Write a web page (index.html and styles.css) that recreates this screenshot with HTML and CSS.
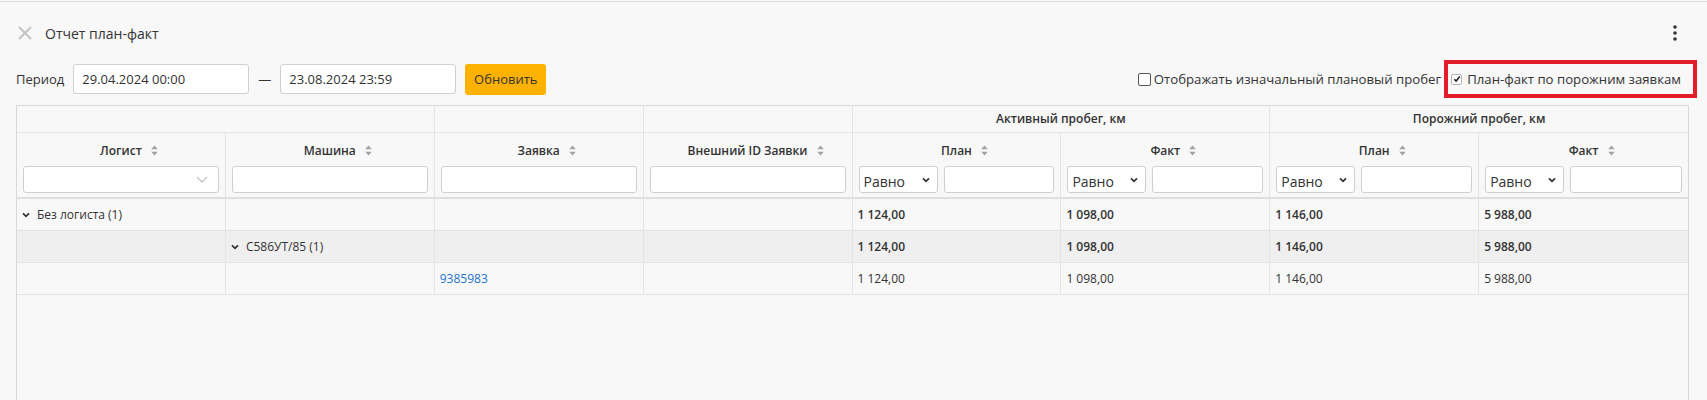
FILE: index.html
```html
<!DOCTYPE html>
<html lang="ru">
<head>
<meta charset="utf-8">
<title>Отчет план-факт</title>
<link rel="stylesheet" href="styles.css">
</head>
<body>
<div class="app">
  <div class="titlebar">
    <svg class="close-icon" width="14" height="14" viewBox="0 0 14 14"><path d="M1 1L13 13M13 1L1 13" stroke="#c4c4c4" stroke-width="2" fill="none"/></svg>
    <span class="title">Отчет план-факт</span>
    <span class="spacer"></span>
    <svg class="kebab" width="4" height="16" viewBox="0 0 4 16"><circle cx="2" cy="2" r="1.8" fill="#333"/><circle cx="2" cy="8" r="1.8" fill="#333"/><circle cx="2" cy="14" r="1.8" fill="#333"/></svg>
  </div>

  <div class="toolbar">
    <span class="label">Период</span>
    <div class="date-input">29.04.2024 00:00</div>
    <span class="dash">—</span>
    <div class="date-input">23.08.2024 23:59</div>
    <button class="btn-refresh">Обновить</button>
    <span class="spacer"></span>
    <label class="check">
      <span class="box"></span>
      <span>Отображать изначальный плановый пробег</span>
    </label>
    <label class="check highlight">
      <span class="box small"><svg width="8" height="8" viewBox="0 0 8 8"><path d="M1.3 4.2L3.1 6L6.8 1.6" stroke="#222" stroke-width="1.6" fill="none"/></svg></span>
      <span>План-факт по порожним заявкам</span>
    </label>
  </div>

  <div class="grid-wrap">
    <table class="grid">
      <colgroup>
        <col><col><col><col><col><col><col><col>
      </colgroup>
      <thead>
        <tr class="group-row">
          <th colspan="2"></th>
          <th></th>
          <th></th>
          <th colspan="2">Активный пробег, км</th>
          <th colspan="2">Порожний пробег, км</th>
        </tr>
        <tr class="head-row">
          <th>
            <div class="th-label">Логист<svg class="sort" width="7" height="11" viewBox="0 0 7 11"><path d="M3.5 0.5L6.8 4.3H0.2Z M3.5 10.5L6.8 6.7H0.2Z" fill="#a3a3a3"/></svg></div>
            <div class="filter"><div class="combo"><svg width="12" height="7" viewBox="0 0 12 7"><path d="M1 1l5 5 5-5" fill="none" stroke="#c2c2c2" stroke-width="1.3"/></svg></div></div>
          </th>
          <th>
            <div class="th-label">Машина<svg class="sort" width="7" height="11" viewBox="0 0 7 11"><path d="M3.5 0.5L6.8 4.3H0.2Z M3.5 10.5L6.8 6.7H0.2Z" fill="#a3a3a3"/></svg></div>
            <div class="filter"><div class="text-input"></div></div>
          </th>
          <th>
            <div class="th-label">Заявка<svg class="sort" width="7" height="11" viewBox="0 0 7 11"><path d="M3.5 0.5L6.8 4.3H0.2Z M3.5 10.5L6.8 6.7H0.2Z" fill="#a3a3a3"/></svg></div>
            <div class="filter"><div class="text-input"></div></div>
          </th>
          <th>
            <div class="th-label">Внешний ID Заявки<svg class="sort" width="7" height="11" viewBox="0 0 7 11"><path d="M3.5 0.5L6.8 4.3H0.2Z M3.5 10.5L6.8 6.7H0.2Z" fill="#a3a3a3"/></svg></div>
            <div class="filter"><div class="text-input"></div></div>
          </th>
          <th>
            <div class="th-label">План<svg class="sort" width="7" height="11" viewBox="0 0 7 11"><path d="M3.5 0.5L6.8 4.3H0.2Z M3.5 10.5L6.8 6.7H0.2Z" fill="#a3a3a3"/></svg></div>
            <div class="filter"><div class="select">Равно<svg width="8" height="6" viewBox="0 0 8 6"><path d="M1 1.3l3 3 3-3" stroke="#333" stroke-width="1.8" fill="none"/></svg></div><div class="text-input"></div></div>
          </th>
          <th>
            <div class="th-label">Факт<svg class="sort" width="7" height="11" viewBox="0 0 7 11"><path d="M3.5 0.5L6.8 4.3H0.2Z M3.5 10.5L6.8 6.7H0.2Z" fill="#a3a3a3"/></svg></div>
            <div class="filter"><div class="select">Равно<svg width="8" height="6" viewBox="0 0 8 6"><path d="M1 1.3l3 3 3-3" stroke="#333" stroke-width="1.8" fill="none"/></svg></div><div class="text-input"></div></div>
          </th>
          <th>
            <div class="th-label">План<svg class="sort" width="7" height="11" viewBox="0 0 7 11"><path d="M3.5 0.5L6.8 4.3H0.2Z M3.5 10.5L6.8 6.7H0.2Z" fill="#a3a3a3"/></svg></div>
            <div class="filter"><div class="select">Равно<svg width="8" height="6" viewBox="0 0 8 6"><path d="M1 1.3l3 3 3-3" stroke="#333" stroke-width="1.8" fill="none"/></svg></div><div class="text-input"></div></div>
          </th>
          <th>
            <div class="th-label">Факт<svg class="sort" width="7" height="11" viewBox="0 0 7 11"><path d="M3.5 0.5L6.8 4.3H0.2Z M3.5 10.5L6.8 6.7H0.2Z" fill="#a3a3a3"/></svg></div>
            <div class="filter"><div class="select">Равно<svg width="8" height="6" viewBox="0 0 8 6"><path d="M1 1.3l3 3 3-3" stroke="#333" stroke-width="1.8" fill="none"/></svg></div><div class="text-input"></div></div>
          </th>
        </tr>
      </thead>
      <tbody>
        <tr class="lvl1">
          <td><span class="grp"><svg width="8" height="6" viewBox="0 0 8 6"><path d="M1 1.3l3 3 3-3" stroke="#333" stroke-width="1.8" fill="none"/></svg>Без логиста (1)</span></td>
          <td></td><td></td><td></td>
          <td class="num">1 124,00</td>
          <td class="num">1 098,00</td>
          <td class="num">1 146,00</td>
          <td class="num">5 988,00</td>
        </tr>
        <tr class="lvl2">
          <td></td>
          <td><span class="grp"><svg width="8" height="6" viewBox="0 0 8 6"><path d="M1 1.3l3 3 3-3" stroke="#333" stroke-width="1.8" fill="none"/></svg>С586УТ/85 (1)</span></td>
          <td></td><td></td>
          <td class="num">1 124,00</td>
          <td class="num">1 098,00</td>
          <td class="num">1 146,00</td>
          <td class="num">5 988,00</td>
        </tr>
        <tr class="leaf">
          <td></td><td></td>
          <td><a class="link" href="#">9385983</a></td>
          <td></td>
          <td>1 124,00</td>
          <td>1 098,00</td>
          <td>1 146,00</td>
          <td>5 988,00</td>
        </tr>
      </tbody>
    </table>
  </div>
</div>
</body>
</html>
```

FILE: styles.css
```css
html, body {
  margin: 0;
  padding: 0;
  background: #f8f8f8;
  overflow: hidden;
}
body {
  padding-top: 1px;
  font-family: "Open Sans", "Noto Sans", sans-serif;
  font-size: 13px;
  color: #333;
}
.app {
  height: calc(100vh - 1px);
  box-sizing: border-box;
  border-top: 1px solid #dcdcdc;
  display: flex;
  flex-direction: column;
}
.spacer { flex: 1; }

.titlebar {
  display: flex;
  align-items: center;
  height: 26px;
  padding: 18px 30px 0 18px;
}
.close-icon { display: block; }
.title {
  margin-left: 13px;
  font-size: 14px;
  color: #333;
}
.kebab { display: block; }

.toolbar {
  display: flex;
  align-items: center;
  height: 40px;
  margin-top: 13px;
  padding: 0 10px 0 16px;
}
.label { margin-right: 9px; }
.date-input {
  width: 176px;
  height: 30px;
  box-sizing: border-box;
  border: 1px solid #cfcfcf;
  border-radius: 3px;
  background: #fff;
  padding: 0 8px;
  line-height: 28px;
  color: #333;
}
.dash { margin: 0 9px; color: #333; }
.btn-refresh {
  margin-left: 9px;
  width: 81px;
  height: 31px;
  border: none;
  border-radius: 3px;
  background: #fdb100;
  color: #333;
  font-family: inherit;
  font-size: 13px;
  padding: 0;
}
.check {
  display: flex;
  align-items: center;
  gap: 3px;
  color: #333;
  font-size: 13.2px;
}
.box {
  width: 13px;
  height: 13px;
  box-sizing: border-box;
  border: 1px solid #555;
  border-radius: 2px;
  background: #fff;
}
.box.small {
  width: 11px;
  height: 11px;
  border-color: #b5b5b5;
  display: flex;
  align-items: center;
  justify-content: center;
}
.box.small svg { display: block; }
.check.highlight {
  margin-left: 3px;
  height: 38px;
  box-sizing: border-box;
  border: 4px solid #e31e2a;
  padding: 0 12px 0 3px;
  gap: 5px;
}

.grid-wrap {
  flex: 1;
  margin: 6px 18px 0 16px;
  border: 1px solid #d9d9d9;
  border-bottom: none;
  overflow: hidden;
}
.grid {
  width: 100%;
  table-layout: fixed;
  border-collapse: separate;
  border-spacing: 0;
  font-size: 12px;
}
.grid th, .grid td {
  border-right: 1px solid #e4e4e4;
  border-bottom: 1px solid #e4e4e4;
  padding: 0 5px;
  text-align: left;
  overflow: hidden;
  white-space: nowrap;
}
.grid th:last-child, .grid td:last-child { border-right: none; }

.group-row th {
  height: 26px;
  line-height: 26px;
  padding: 0;
  text-align: center;
  font-weight: 600;
  color: #333;
}
.head-row th {
  padding: 7px 5px 4px;
  text-align: center;
  border-bottom: 2px solid #dedede;
  vertical-align: top;
}
.th-label {
  display: inline-flex;
  align-items: center;
  gap: 9px;
  margin-right: -16px;
  height: 20px;
  font-weight: 600;
  color: #333;
}
.sort { display: block; }
.filter {
  display: flex;
  gap: 6px;
  margin-top: 6px;
  height: 27px;
  padding: 0 1px;
}
.combo, .text-input, .select {
  height: 27px;
  box-sizing: border-box;
  border: 1px solid #cfcfcf;
  border-radius: 3px;
  background: #fff;
}
.combo {
  flex: 1;
  display: flex;
  align-items: center;
  justify-content: flex-end;
  padding-right: 10px;
}
.combo svg { display: block; }
.text-input { flex: 1; }
.select {
  width: 79px;
  flex: none;
  display: flex;
  align-items: center;
  justify-content: space-between;
  padding: 3px 7px 0 4px;
  font-size: 14px;
  font-weight: 400;
  color: #333;
  text-align: left;
}
.select svg { display: block; margin-top: -3px; }

.grid tbody td {
  height: 32px;
  box-sizing: border-box;
  line-height: 20px;
  padding: 1px 5px 0;
  color: #333;
}
.lvl1 td, .leaf td { background: #f8f8f8; }
.lvl2 td { background: #efefef; }
.num { font-weight: 600; }
.leaf td { color: #444; }
.grp {
  display: inline-flex;
  align-items: center;
  gap: 7px;
  vertical-align: middle;
}
.grp svg { display: block; }
.link { color: #1f75cb; text-decoration: none; }
```
